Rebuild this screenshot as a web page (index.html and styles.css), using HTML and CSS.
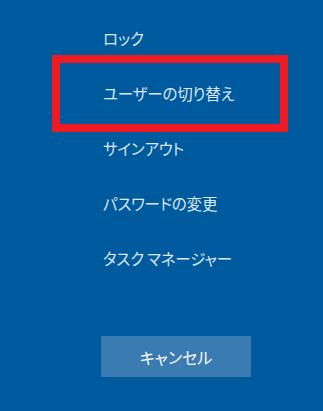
FILE: index.html
```html
<!DOCTYPE html>
<html lang="ja">
<head>
    <meta charset="UTF-8">
    <meta name="viewport" content="width=device-width, initial-scale=1.0">
    <title>Ctrl+Alt+Del</title>
    <link rel="stylesheet" href="styles.css">
</head>
<body>
    <div class="screen">
        <ul class="menu">
            <li class="item">ロック</li>
            <li class="item selected">ユーザーの切り替え</li>
            <li class="item">サインアウト</li>
            <li class="item">パスワードの変更</li>
            <li class="item">タスク マネージャー</li>
        </ul>
        <button type="button" class="cancel">キャンセル</button>
    </div>
</body>
</html>
```

FILE: styles.css
```css
*, *::after { margin: 0; padding: 0; box-sizing: border-box; }
body { background-color: #005a9e; font-family: "Noto Sans CJK JP", "Noto Sans", sans-serif; color: #dce7f2; width: 323px; height: 411px; overflow: hidden; }
.screen { padding-top: 10px; }
.menu { list-style: none; }
.item { position: relative; height: 55px; display: flex; align-items: center; padding-left: 103px; font-size: 15.5px; letter-spacing: -0.2px; font-feature-settings: "palt"; }

/* highlight frame round the chosen entry */
.item.selected::after { content: ""; position: absolute; left: 52px; top: -10px; width: 236px; height: 77px; border: 8px solid #ed1c24; }

.cancel { display: block; margin: 51px 0 0 101px; width: 150px; height: 41px; background-color: #3a7cb1; color: #fff; border: none; font-family: inherit; font-size: 16px; font-feature-settings: "palt"; }
```
